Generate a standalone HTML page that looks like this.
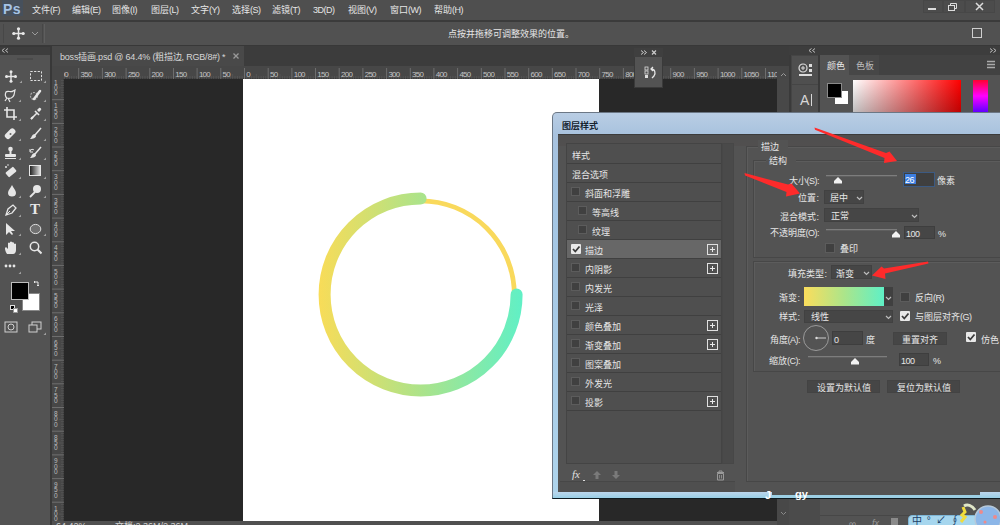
<!DOCTYPE html>
<html lang="zh-CN"><head><meta charset="utf-8">
<style>
*{margin:0;padding:0;box-sizing:border-box}
html,body{width:1000px;height:525px;overflow:hidden;background:#535353;font-family:"Liberation Sans",sans-serif;color:#e0e0e0}
.a{position:absolute}
.t{position:absolute;font-size:9px;line-height:12px;white-space:nowrap;color:#e6e6e6}
.n{letter-spacing:-0.5px}
.cb{position:absolute;width:9px;height:9px;background:#404040;border:1px solid #5c5c5c}
.cbk{position:absolute;width:10px;height:10px;background:#e8e8e8;border-radius:1px}
.pl{position:absolute;width:11px;height:11px;border:1px solid #e0e0e0}
.pl:before{content:"";position:absolute;left:2px;top:4px;width:5px;height:1px;background:#e8e8e8}
.pl:after{content:"";position:absolute;left:4px;top:2px;width:1px;height:5px;background:#e8e8e8}
.dd{position:absolute;background:#464646;border:1px solid #414141}
.inp{position:absolute;background:#464646;border:1px solid #3e3e3e}
</style></head><body>
<div class="a" style="left:0px;top:0px;width:1000px;height:20px;background:#4f4f4f;"></div>
<div class="a" style="left:0px;top:20px;width:1000px;height:2px;background:#3b3b3b;"></div>
<div class="a" style="left:2px;top:0px;width:21px;height:16px;background:#46505c;"></div>
<div class="t" style="left:3px;top:2px;font-size:14px;line-height:15px;font-weight:bold;color:#a6c4e6;letter-spacing:0.5px">Ps</div>
<div class="t" style="left:32px;top:4px;">文件<span class="n">(F)</span></div>
<div class="t" style="left:72px;top:4px;">编辑<span class="n">(E)</span></div>
<div class="t" style="left:112px;top:4px;">图像<span class="n">(I)</span></div>
<div class="t" style="left:151px;top:4px;">图层<span class="n">(L)</span></div>
<div class="t" style="left:191px;top:4px;">文字<span class="n">(Y)</span></div>
<div class="t" style="left:232px;top:4px;">选择<span class="n">(S)</span></div>
<div class="t" style="left:272px;top:4px;">滤镜<span class="n">(T)</span></div>
<div class="t" style="left:348px;top:4px;">视图<span class="n">(V)</span></div>
<div class="t" style="left:390px;top:4px;">窗口<span class="n">(W)</span></div>
<div class="t" style="left:434px;top:4px;">帮助<span class="n">(H)</span></div>
<div class="t" style="left:313px;top:4px;"><span class="n">3D(D)</span></div>
<div class="a" style="left:923px;top:0px;width:20px;height:13px;background:#4c4c4c;border:1px solid #474747"></div>
<div class="a" style="left:943px;top:0px;width:22px;height:13px;background:#4c4c4c;border:1px solid #474747"></div>
<div class="a" style="left:965px;top:0px;width:30px;height:13px;background:#4c4c4c;border:1px solid #474747"></div>
<div class="a" style="left:928px;top:8px;width:8px;height:2px;background:#dcdcdc;"></div>
<svg class="a" style="left:947px;top:2px" width="12" height="10"><rect x="1.5" y="3.5" width="6" height="5" fill="none" stroke="#dcdcdc"/><path d="M3.5 3.5V1.5H9.5V6.5H7.5" fill="none" stroke="#dcdcdc"/></svg>
<svg class="a" style="left:974px;top:2px" width="12" height="10"><path d="M2 1L9 8M9 1L2 8" stroke="#dcdcdc" stroke-width="1.5"/></svg>
<div class="a" style="left:0px;top:22px;width:1000px;height:23px;background:#515151;"></div>
<div class="a" style="left:0px;top:45px;width:1000px;height:2px;background:#383838;"></div>
<div class="a" style="left:3px;top:24px;width:1px;height:19px;background:#474747;"></div>
<div class="a" style="left:42px;top:24px;width:1px;height:19px;background:#474747;"></div>
<div class="a" style="left:44px;top:24px;width:1px;height:19px;background:#5e5e5e;"></div>
<svg class="a" style="left:12px;top:27px" width="13" height="13"><path d="M6.5 1V12M1 6.5H12" stroke="#e8e8e8" stroke-width="1.5"/><circle cx="6.5" cy="1.8" r="1.6" fill="#e8e8e8"/><circle cx="6.5" cy="11.2" r="1.6" fill="#e8e8e8"/><circle cx="1.8" cy="6.5" r="1.6" fill="#e8e8e8"/><circle cx="11.2" cy="6.5" r="1.6" fill="#e8e8e8"/></svg>
<svg class="a" style="left:31px;top:31px" width="8" height="5"><path d="M1 1L4 4L7 1" fill="none" stroke="#9a9a9a"/></svg>
<div class="t" style="left:448px;top:28px;">点按并拖移可调整效果的位置。</div>
<svg class="a" style="left:971px;top:27px" width="12" height="12"><rect x="1.5" y="1.5" width="9" height="9" fill="none" stroke="#cfcfcf"/></svg>
<div class="a" style="left:0px;top:47px;width:50px;height:478px;background:#535353;"></div>
<div class="a" style="left:0px;top:47px;width:50px;height:8px;background:#3d3d3d;"></div>
<svg class="a" style="left:1px;top:48px" width="8" height="5"><path d="M3.5 0.5L1 2.5L3.5 4.5M7 0.5L4.5 2.5L7 4.5" fill="none" stroke="#bdbdbd"/></svg>
<div class="a" style="left:17px;top:58px;width:16px;height:2px;background:#4a4a4a;"></div>
<div class="a" style="left:50px;top:46px;width:2px;height:479px;background:#383838;"></div>
<svg class="a" style="left:5px;top:70px" width="12" height="13"><path d="M6 1.5V11.5M1 6.5H11" stroke="#e8e8e8" stroke-width="1.4"/><circle cx="6" cy="1.8" r="1.5" fill="#e8e8e8"/><circle cx="6" cy="11.2" r="1.5" fill="#e8e8e8"/><circle cx="1.5" cy="6.5" r="1.5" fill="#e8e8e8"/><circle cx="10.5" cy="6.5" r="1.5" fill="#e8e8e8"/></svg>
<svg class="a" style="left:19px;top:80px" width="3" height="3"><path d="M3 0.5V3H0.5Z" fill="#a0a0a0"/></svg>
<svg class="a" style="left:29px;top:70px" width="14" height="13"><rect x="1.5" y="1.5" width="11" height="9" fill="none" stroke="#e0e0e0" stroke-dasharray="2.2 1.4"/></svg>
<svg class="a" style="left:43px;top:80px" width="3" height="3"><path d="M3 0.5V3H0.5Z" fill="#a0a0a0"/></svg>
<svg class="a" style="left:4px;top:89px" width="13" height="14"><path d="M2 3C4 1 7 4 9 2L11 1L10 6C9 9 6 10 3 9C1 8 1 5 2 3ZM3 9L1 12M4 9L6 13" fill="none" stroke="#e6e6e6" stroke-width="1.2"/></svg>
<svg class="a" style="left:18px;top:99px" width="3" height="3"><path d="M3 0.5V3H0.5Z" fill="#a0a0a0"/></svg>
<svg class="a" style="left:29px;top:89px" width="13" height="14"><circle cx="5" cy="7" r="3.5" fill="none" stroke="#a9a9a9" stroke-width="1.2" stroke-dasharray="2 1"/><path d="M5 10L11 2" stroke="#e6e6e6" stroke-width="2.5" stroke-linecap="round"/></svg>
<svg class="a" style="left:43px;top:99px" width="3" height="3"><path d="M3 0.5V3H0.5Z" fill="#a0a0a0"/></svg>
<svg class="a" style="left:4px;top:107px" width="13" height="14"><path d="M3 0V10H13M0 3H10V13" fill="none" stroke="#e6e6e6" stroke-width="1.6"/></svg>
<svg class="a" style="left:18px;top:118px" width="3" height="3"><path d="M3 0.5V3H0.5Z" fill="#a0a0a0"/></svg>
<svg class="a" style="left:29px;top:107px" width="13" height="14"><path d="M2 12L8 6M6 4L10 8" stroke="#e6e6e6" stroke-width="1.6"/><path d="M8 3L10 1C11 0 13 2 12 3L10 5" fill="#e6e6e6"/><path d="M2 12L4 10" stroke="#e6e6e6" stroke-width="2"/></svg>
<svg class="a" style="left:43px;top:118px" width="3" height="3"><path d="M3 0.5V3H0.5Z" fill="#a0a0a0"/></svg>
<svg class="a" style="left:4px;top:127px" width="13" height="14"><rect x="3" y="1" width="6" height="12" rx="2.5" transform="rotate(45 6.5 7)" fill="#e6e6e6"/><circle cx="6.5" cy="7" r="1" fill="#666"/></svg>
<svg class="a" style="left:18px;top:138px" width="3" height="3"><path d="M3 0.5V3H0.5Z" fill="#a0a0a0"/></svg>
<svg class="a" style="left:29px;top:127px" width="13" height="14"><path d="M12 1L6 8" stroke="#e6e6e6" stroke-width="1.5"/><path d="M6 7C3 7 3 10 1 12C4 12 7 11 7 9Z" fill="#e6e6e6"/></svg>
<svg class="a" style="left:43px;top:138px" width="3" height="3"><path d="M3 0.5V3H0.5Z" fill="#a0a0a0"/></svg>
<svg class="a" style="left:4px;top:146px" width="13" height="14"><circle cx="6.5" cy="3" r="2.3" fill="#e6e6e6"/><rect x="5.5" y="4" width="2" height="4" fill="#e6e6e6"/><rect x="1" y="8" width="11" height="3" rx="1" fill="#e6e6e6"/><rect x="1" y="12" width="11" height="1" fill="#e6e6e6"/></svg>
<svg class="a" style="left:18px;top:157px" width="3" height="3"><path d="M3 0.5V3H0.5Z" fill="#a0a0a0"/></svg>
<svg class="a" style="left:29px;top:146px" width="13" height="14"><path d="M12 1L6 8" stroke="#e6e6e6" stroke-width="1.5"/><path d="M6 7C3 7 3 10 1 12C4 12 7 11 7 9Z" fill="#e6e6e6"/><path d="M1 5C2 3 4 3 5 4M1 3V6H4" fill="none" stroke="#e6e6e6"/></svg>
<svg class="a" style="left:43px;top:157px" width="3" height="3"><path d="M3 0.5V3H0.5Z" fill="#a0a0a0"/></svg>
<svg class="a" style="left:4px;top:164px" width="13" height="14"><rect x="4" y="3" width="6" height="10" rx="1" transform="rotate(50 7 8)" fill="#e6e6e6"/><circle cx="2" cy="3" r="1" fill="#e6e6e6"/><circle cx="4" cy="1" r="0.8" fill="#e6e6e6"/></svg>
<svg class="a" style="left:18px;top:176px" width="3" height="3"><path d="M3 0.5V3H0.5Z" fill="#a0a0a0"/></svg>
<div class="a" style="left:29px;top:165px;width:12px;height:11px;border:1px solid #e6e6e6;background:linear-gradient(90deg,#222,#ddd)"></div>
<svg class="a" style="left:43px;top:176px" width="3" height="3"><path d="M3 0.5V3H0.5Z" fill="#a0a0a0"/></svg>
<svg class="a" style="left:7px;top:184px" width="10" height="14"><path d="M5 1C6.5 4 9 6.5 9 9C9 11.5 7.3 12.5 5 12.5C2.7 12.5 1 11.5 1 9C1 6.5 3.5 4 5 1Z" fill="#e6e6e6"/></svg>
<svg class="a" style="left:18px;top:195px" width="3" height="3"><path d="M3 0.5V3H0.5Z" fill="#a0a0a0"/></svg>
<svg class="a" style="left:29px;top:184px" width="13" height="14"><circle cx="8" cy="5" r="4" fill="#e6e6e6"/><path d="M6 8L1 13" stroke="#e6e6e6" stroke-width="1.8"/></svg>
<svg class="a" style="left:43px;top:195px" width="3" height="3"><path d="M3 0.5V3H0.5Z" fill="#a0a0a0"/></svg>
<svg class="a" style="left:4px;top:203px" width="13" height="14"><path d="M2 12L4 6L9 2L12 5L8 10Z" fill="none" stroke="#e6e6e6" stroke-width="1.3"/><path d="M2 12L6 8" stroke="#e6e6e6"/></svg>
<svg class="a" style="left:18px;top:214px" width="3" height="3"><path d="M3 0.5V3H0.5Z" fill="#a0a0a0"/></svg>
<div class="t" style="left:30px;top:202px;font-family:Liberation Serif,serif;font-size:15px;line-height:15px;font-weight:bold;color:#e8e8e8">T</div>
<svg class="a" style="left:5px;top:222px" width="12" height="14"><path d="M1 1V13L4 10L7 13L8 12L6 9H10Z" fill="#e6e6e6"/></svg>
<svg class="a" style="left:18px;top:233px" width="3" height="3"><path d="M3 0.5V3H0.5Z" fill="#a0a0a0"/></svg>
<svg class="a" style="left:29px;top:222px" width="13" height="14"><ellipse cx="6.5" cy="7" rx="5.3" ry="4.6" fill="#707070" stroke="#e0e0e0" stroke-width="1"/></svg>
<svg class="a" style="left:43px;top:233px" width="3" height="3"><path d="M3 0.5V3H0.5Z" fill="#a0a0a0"/></svg>
<svg class="a" style="left:4px;top:241px" width="13" height="14"><path d="M3 13C1 10 1 8 1 7L2 6L4 8V2L5 1.5L6 2V6V1L7 0.5L8 1V6V1.5L9 1L10 2V6V3L11 2.5L12 3V9C12 11 11 13 9 13Z" fill="#e6e6e6"/></svg>
<svg class="a" style="left:18px;top:252px" width="3" height="3"><path d="M3 0.5V3H0.5Z" fill="#a0a0a0"/></svg>
<svg class="a" style="left:29px;top:241px" width="13" height="14"><circle cx="5.5" cy="5.5" r="4.2" fill="none" stroke="#e6e6e6" stroke-width="1.5"/><path d="M8.5 8.5L12.5 12.5" stroke="#e6e6e6" stroke-width="2"/></svg>
<svg class="a" style="left:4px;top:264px" width="13" height="5"><circle cx="2" cy="2" r="1.4" fill="#e6e6e6"/><circle cx="6" cy="2" r="1.4" fill="#e6e6e6"/><circle cx="10" cy="2" r="1.4" fill="#e6e6e6"/></svg>
<svg class="a" style="left:18px;top:271px" width="3" height="3"><path d="M3 0.5V3H0.5Z" fill="#a0a0a0"/></svg>
<div class="a" style="left:22px;top:293px;width:18px;height:18px;background:#ffffff;border:1px solid #888"></div>
<div class="a" style="left:11px;top:282px;width:18px;height:18px;background:#000000;border:1px solid #bdbdbd"></div>
<svg class="a" style="left:33px;top:280px" width="8" height="8"><path d="M1 2H5V6M2 1L1 2L2 3M4 5L5 6L6 5" fill="none" stroke="#e6e6e6"/></svg>
<div class="a" style="left:10px;top:305px;width:5px;height:5px;background:#000;border:1px solid #ddd"></div>
<div class="a" style="left:13px;top:308px;width:5px;height:5px;background:#fff;border:1px solid #999"></div>
<svg class="a" style="left:4px;top:321px" width="14" height="12"><rect x="1" y="1" width="12" height="10" fill="none" stroke="#d0d0d0"/><circle cx="7" cy="6" r="3" fill="none" stroke="#d0d0d0"/></svg>
<svg class="a" style="left:28px;top:321px" width="14" height="12"><rect x="4" y="1" width="9" height="7" fill="none" stroke="#d0d0d0"/><rect x="1" y="4" width="8" height="7" fill="#535353" stroke="#d0d0d0"/></svg>
<svg class="a" style="left:43px;top:332px" width="3" height="3"><path d="M3 0.5V3H0.5Z" fill="#a0a0a0"/></svg>
<div class="a" style="left:52px;top:46px;width:725px;height:20px;background:#3c3c3c;"></div>
<div class="a" style="left:52px;top:46px;width:192px;height:20px;background:#494949;"></div>
<div class="t" style="left:60px;top:51px;letter-spacing:-0.2px;color:#d6d6d6">boss插画.psd @ 64.4% (粗描边, RGB/8#) *</div>
<svg class="a" style="left:232px;top:52px" width="8" height="8"><path d="M1.5 1.5L6.5 6.5M6.5 1.5L1.5 6.5" stroke="#9a9a9a" stroke-width="1.3"/></svg>
<div class="a" style="left:52px;top:66px;width:725px;height:13px;background:#474747;"></div>
<div class="a" style="left:52px;top:79px;width:12px;height:442px;background:#474747;"></div>
<div class="a" style="left:64px;top:78px;width:713px;height:1px;background:#3a3a3a;"></div>
<div class="a" style="left:63px;top:66px;width:1px;height:455px;background:#3a3a3a;"></div>
<div class="a" style="left:64px;top:79px;width:713px;height:442px;background:#282828;"></div>
<div class="a" style="left:243px;top:79px;width:356px;height:442px;background:#ffffff;"></div>
<svg class="a" style="left:0;top:66px" width="777" height="13"><path d="M55.1 2V13" stroke="#6e6e6e" stroke-width="1"/><path d="M57.4 10V13" stroke="#5e5e5e" stroke-width="0.6"/><path d="M59.8 10V13" stroke="#5e5e5e" stroke-width="0.6"/><path d="M62.2 10V13" stroke="#5e5e5e" stroke-width="0.6"/><path d="M64.5 10V13" stroke="#5e5e5e" stroke-width="0.6"/><path d="M66.9 8V13" stroke="#5e5e5e" stroke-width="0.6"/><path d="M69.3 10V13" stroke="#5e5e5e" stroke-width="0.6"/><path d="M71.6 10V13" stroke="#5e5e5e" stroke-width="0.6"/><path d="M74.0 10V13" stroke="#5e5e5e" stroke-width="0.6"/><path d="M76.4 10V13" stroke="#5e5e5e" stroke-width="0.6"/><text x="56.9" y="11.3" fill="#c4c4c4" font-size="8" font-family="Liberation Sans" letter-spacing="-0.75">400</text><path d="M78.7 2V13" stroke="#6e6e6e" stroke-width="1"/><path d="M81.1 10V13" stroke="#5e5e5e" stroke-width="0.6"/><path d="M83.5 10V13" stroke="#5e5e5e" stroke-width="0.6"/><path d="M85.8 10V13" stroke="#5e5e5e" stroke-width="0.6"/><path d="M88.2 10V13" stroke="#5e5e5e" stroke-width="0.6"/><path d="M90.6 8V13" stroke="#5e5e5e" stroke-width="0.6"/><path d="M92.9 10V13" stroke="#5e5e5e" stroke-width="0.6"/><path d="M95.3 10V13" stroke="#5e5e5e" stroke-width="0.6"/><path d="M97.7 10V13" stroke="#5e5e5e" stroke-width="0.6"/><path d="M100.1 10V13" stroke="#5e5e5e" stroke-width="0.6"/><text x="80.5" y="11.3" fill="#c4c4c4" font-size="8" font-family="Liberation Sans" letter-spacing="-0.75">350</text><path d="M102.4 2V13" stroke="#6e6e6e" stroke-width="1"/><path d="M104.8 10V13" stroke="#5e5e5e" stroke-width="0.6"/><path d="M107.2 10V13" stroke="#5e5e5e" stroke-width="0.6"/><path d="M109.5 10V13" stroke="#5e5e5e" stroke-width="0.6"/><path d="M111.9 10V13" stroke="#5e5e5e" stroke-width="0.6"/><path d="M114.3 8V13" stroke="#5e5e5e" stroke-width="0.6"/><path d="M116.6 10V13" stroke="#5e5e5e" stroke-width="0.6"/><path d="M119.0 10V13" stroke="#5e5e5e" stroke-width="0.6"/><path d="M121.4 10V13" stroke="#5e5e5e" stroke-width="0.6"/><path d="M123.7 10V13" stroke="#5e5e5e" stroke-width="0.6"/><text x="104.2" y="11.3" fill="#c4c4c4" font-size="8" font-family="Liberation Sans" letter-spacing="-0.75">300</text><path d="M126.1 2V13" stroke="#6e6e6e" stroke-width="1"/><path d="M128.5 10V13" stroke="#5e5e5e" stroke-width="0.6"/><path d="M130.8 10V13" stroke="#5e5e5e" stroke-width="0.6"/><path d="M133.2 10V13" stroke="#5e5e5e" stroke-width="0.6"/><path d="M135.6 10V13" stroke="#5e5e5e" stroke-width="0.6"/><path d="M137.9 8V13" stroke="#5e5e5e" stroke-width="0.6"/><path d="M140.3 10V13" stroke="#5e5e5e" stroke-width="0.6"/><path d="M142.7 10V13" stroke="#5e5e5e" stroke-width="0.6"/><path d="M145.0 10V13" stroke="#5e5e5e" stroke-width="0.6"/><path d="M147.4 10V13" stroke="#5e5e5e" stroke-width="0.6"/><text x="127.9" y="11.3" fill="#c4c4c4" font-size="8" font-family="Liberation Sans" letter-spacing="-0.75">250</text><path d="M149.8 2V13" stroke="#6e6e6e" stroke-width="1"/><path d="M152.1 10V13" stroke="#5e5e5e" stroke-width="0.6"/><path d="M154.5 10V13" stroke="#5e5e5e" stroke-width="0.6"/><path d="M156.9 10V13" stroke="#5e5e5e" stroke-width="0.6"/><path d="M159.3 10V13" stroke="#5e5e5e" stroke-width="0.6"/><path d="M161.6 8V13" stroke="#5e5e5e" stroke-width="0.6"/><path d="M164.0 10V13" stroke="#5e5e5e" stroke-width="0.6"/><path d="M166.4 10V13" stroke="#5e5e5e" stroke-width="0.6"/><path d="M168.7 10V13" stroke="#5e5e5e" stroke-width="0.6"/><path d="M171.1 10V13" stroke="#5e5e5e" stroke-width="0.6"/><text x="151.6" y="11.3" fill="#c4c4c4" font-size="8" font-family="Liberation Sans" letter-spacing="-0.75">200</text><path d="M173.5 2V13" stroke="#6e6e6e" stroke-width="1"/><path d="M175.8 10V13" stroke="#5e5e5e" stroke-width="0.6"/><path d="M178.2 10V13" stroke="#5e5e5e" stroke-width="0.6"/><path d="M180.6 10V13" stroke="#5e5e5e" stroke-width="0.6"/><path d="M182.9 10V13" stroke="#5e5e5e" stroke-width="0.6"/><path d="M185.3 8V13" stroke="#5e5e5e" stroke-width="0.6"/><path d="M187.7 10V13" stroke="#5e5e5e" stroke-width="0.6"/><path d="M190.0 10V13" stroke="#5e5e5e" stroke-width="0.6"/><path d="M192.4 10V13" stroke="#5e5e5e" stroke-width="0.6"/><path d="M194.8 10V13" stroke="#5e5e5e" stroke-width="0.6"/><text x="175.3" y="11.3" fill="#c4c4c4" font-size="8" font-family="Liberation Sans" letter-spacing="-0.75">150</text><path d="M197.1 2V13" stroke="#6e6e6e" stroke-width="1"/><path d="M199.5 10V13" stroke="#5e5e5e" stroke-width="0.6"/><path d="M201.9 10V13" stroke="#5e5e5e" stroke-width="0.6"/><path d="M204.2 10V13" stroke="#5e5e5e" stroke-width="0.6"/><path d="M206.6 10V13" stroke="#5e5e5e" stroke-width="0.6"/><path d="M209.0 8V13" stroke="#5e5e5e" stroke-width="0.6"/><path d="M211.3 10V13" stroke="#5e5e5e" stroke-width="0.6"/><path d="M213.7 10V13" stroke="#5e5e5e" stroke-width="0.6"/><path d="M216.1 10V13" stroke="#5e5e5e" stroke-width="0.6"/><path d="M218.5 10V13" stroke="#5e5e5e" stroke-width="0.6"/><text x="198.9" y="11.3" fill="#c4c4c4" font-size="8" font-family="Liberation Sans" letter-spacing="-0.75">100</text><path d="M220.8 2V13" stroke="#6e6e6e" stroke-width="1"/><path d="M223.2 10V13" stroke="#5e5e5e" stroke-width="0.6"/><path d="M225.6 10V13" stroke="#5e5e5e" stroke-width="0.6"/><path d="M227.9 10V13" stroke="#5e5e5e" stroke-width="0.6"/><path d="M230.3 10V13" stroke="#5e5e5e" stroke-width="0.6"/><path d="M232.7 8V13" stroke="#5e5e5e" stroke-width="0.6"/><path d="M235.0 10V13" stroke="#5e5e5e" stroke-width="0.6"/><path d="M237.4 10V13" stroke="#5e5e5e" stroke-width="0.6"/><path d="M239.8 10V13" stroke="#5e5e5e" stroke-width="0.6"/><path d="M242.1 10V13" stroke="#5e5e5e" stroke-width="0.6"/><text x="222.6" y="11.3" fill="#c4c4c4" font-size="8" font-family="Liberation Sans" letter-spacing="-0.75">50</text><path d="M244.5 2V13" stroke="#6e6e6e" stroke-width="1"/><path d="M246.9 10V13" stroke="#5e5e5e" stroke-width="0.6"/><path d="M249.2 10V13" stroke="#5e5e5e" stroke-width="0.6"/><path d="M251.6 10V13" stroke="#5e5e5e" stroke-width="0.6"/><path d="M254.0 10V13" stroke="#5e5e5e" stroke-width="0.6"/><path d="M256.3 8V13" stroke="#5e5e5e" stroke-width="0.6"/><path d="M258.7 10V13" stroke="#5e5e5e" stroke-width="0.6"/><path d="M261.1 10V13" stroke="#5e5e5e" stroke-width="0.6"/><path d="M263.4 10V13" stroke="#5e5e5e" stroke-width="0.6"/><path d="M265.8 10V13" stroke="#5e5e5e" stroke-width="0.6"/><text x="246.3" y="11.3" fill="#c4c4c4" font-size="8" font-family="Liberation Sans" letter-spacing="-0.75">0</text><path d="M268.2 2V13" stroke="#6e6e6e" stroke-width="1"/><path d="M270.5 10V13" stroke="#5e5e5e" stroke-width="0.6"/><path d="M272.9 10V13" stroke="#5e5e5e" stroke-width="0.6"/><path d="M275.3 10V13" stroke="#5e5e5e" stroke-width="0.6"/><path d="M277.7 10V13" stroke="#5e5e5e" stroke-width="0.6"/><path d="M280.0 8V13" stroke="#5e5e5e" stroke-width="0.6"/><path d="M282.4 10V13" stroke="#5e5e5e" stroke-width="0.6"/><path d="M284.8 10V13" stroke="#5e5e5e" stroke-width="0.6"/><path d="M287.1 10V13" stroke="#5e5e5e" stroke-width="0.6"/><path d="M289.5 10V13" stroke="#5e5e5e" stroke-width="0.6"/><text x="270.0" y="11.3" fill="#c4c4c4" font-size="8" font-family="Liberation Sans" letter-spacing="-0.75">50</text><path d="M291.9 2V13" stroke="#6e6e6e" stroke-width="1"/><path d="M294.2 10V13" stroke="#5e5e5e" stroke-width="0.6"/><path d="M296.6 10V13" stroke="#5e5e5e" stroke-width="0.6"/><path d="M299.0 10V13" stroke="#5e5e5e" stroke-width="0.6"/><path d="M301.3 10V13" stroke="#5e5e5e" stroke-width="0.6"/><path d="M303.7 8V13" stroke="#5e5e5e" stroke-width="0.6"/><path d="M306.1 10V13" stroke="#5e5e5e" stroke-width="0.6"/><path d="M308.4 10V13" stroke="#5e5e5e" stroke-width="0.6"/><path d="M310.8 10V13" stroke="#5e5e5e" stroke-width="0.6"/><path d="M313.2 10V13" stroke="#5e5e5e" stroke-width="0.6"/><text x="293.7" y="11.3" fill="#c4c4c4" font-size="8" font-family="Liberation Sans" letter-spacing="-0.75">100</text><path d="M315.5 2V13" stroke="#6e6e6e" stroke-width="1"/><path d="M317.9 10V13" stroke="#5e5e5e" stroke-width="0.6"/><path d="M320.3 10V13" stroke="#5e5e5e" stroke-width="0.6"/><path d="M322.6 10V13" stroke="#5e5e5e" stroke-width="0.6"/><path d="M325.0 10V13" stroke="#5e5e5e" stroke-width="0.6"/><path d="M327.4 8V13" stroke="#5e5e5e" stroke-width="0.6"/><path d="M329.7 10V13" stroke="#5e5e5e" stroke-width="0.6"/><path d="M332.1 10V13" stroke="#5e5e5e" stroke-width="0.6"/><path d="M334.5 10V13" stroke="#5e5e5e" stroke-width="0.6"/><path d="M336.9 10V13" stroke="#5e5e5e" stroke-width="0.6"/><text x="317.3" y="11.3" fill="#c4c4c4" font-size="8" font-family="Liberation Sans" letter-spacing="-0.75">150</text><path d="M339.2 2V13" stroke="#6e6e6e" stroke-width="1"/><path d="M341.6 10V13" stroke="#5e5e5e" stroke-width="0.6"/><path d="M344.0 10V13" stroke="#5e5e5e" stroke-width="0.6"/><path d="M346.3 10V13" stroke="#5e5e5e" stroke-width="0.6"/><path d="M348.7 10V13" stroke="#5e5e5e" stroke-width="0.6"/><path d="M351.1 8V13" stroke="#5e5e5e" stroke-width="0.6"/><path d="M353.4 10V13" stroke="#5e5e5e" stroke-width="0.6"/><path d="M355.8 10V13" stroke="#5e5e5e" stroke-width="0.6"/><path d="M358.2 10V13" stroke="#5e5e5e" stroke-width="0.6"/><path d="M360.5 10V13" stroke="#5e5e5e" stroke-width="0.6"/><text x="341.0" y="11.3" fill="#c4c4c4" font-size="8" font-family="Liberation Sans" letter-spacing="-0.75">200</text><path d="M362.9 2V13" stroke="#6e6e6e" stroke-width="1"/><path d="M365.3 10V13" stroke="#5e5e5e" stroke-width="0.6"/><path d="M367.6 10V13" stroke="#5e5e5e" stroke-width="0.6"/><path d="M370.0 10V13" stroke="#5e5e5e" stroke-width="0.6"/><path d="M372.4 10V13" stroke="#5e5e5e" stroke-width="0.6"/><path d="M374.7 8V13" stroke="#5e5e5e" stroke-width="0.6"/><path d="M377.1 10V13" stroke="#5e5e5e" stroke-width="0.6"/><path d="M379.5 10V13" stroke="#5e5e5e" stroke-width="0.6"/><path d="M381.8 10V13" stroke="#5e5e5e" stroke-width="0.6"/><path d="M384.2 10V13" stroke="#5e5e5e" stroke-width="0.6"/><text x="364.7" y="11.3" fill="#c4c4c4" font-size="8" font-family="Liberation Sans" letter-spacing="-0.75">250</text><path d="M386.6 2V13" stroke="#6e6e6e" stroke-width="1"/><path d="M388.9 10V13" stroke="#5e5e5e" stroke-width="0.6"/><path d="M391.3 10V13" stroke="#5e5e5e" stroke-width="0.6"/><path d="M393.7 10V13" stroke="#5e5e5e" stroke-width="0.6"/><path d="M396.1 10V13" stroke="#5e5e5e" stroke-width="0.6"/><path d="M398.4 8V13" stroke="#5e5e5e" stroke-width="0.6"/><path d="M400.8 10V13" stroke="#5e5e5e" stroke-width="0.6"/><path d="M403.2 10V13" stroke="#5e5e5e" stroke-width="0.6"/><path d="M405.5 10V13" stroke="#5e5e5e" stroke-width="0.6"/><path d="M407.9 10V13" stroke="#5e5e5e" stroke-width="0.6"/><text x="388.4" y="11.3" fill="#c4c4c4" font-size="8" font-family="Liberation Sans" letter-spacing="-0.75">300</text><path d="M410.3 2V13" stroke="#6e6e6e" stroke-width="1"/><path d="M412.6 10V13" stroke="#5e5e5e" stroke-width="0.6"/><path d="M415.0 10V13" stroke="#5e5e5e" stroke-width="0.6"/><path d="M417.4 10V13" stroke="#5e5e5e" stroke-width="0.6"/><path d="M419.7 10V13" stroke="#5e5e5e" stroke-width="0.6"/><path d="M422.1 8V13" stroke="#5e5e5e" stroke-width="0.6"/><path d="M424.5 10V13" stroke="#5e5e5e" stroke-width="0.6"/><path d="M426.8 10V13" stroke="#5e5e5e" stroke-width="0.6"/><path d="M429.2 10V13" stroke="#5e5e5e" stroke-width="0.6"/><path d="M431.6 10V13" stroke="#5e5e5e" stroke-width="0.6"/><text x="412.1" y="11.3" fill="#c4c4c4" font-size="8" font-family="Liberation Sans" letter-spacing="-0.75">350</text><path d="M433.9 2V13" stroke="#6e6e6e" stroke-width="1"/><path d="M436.3 10V13" stroke="#5e5e5e" stroke-width="0.6"/><path d="M438.7 10V13" stroke="#5e5e5e" stroke-width="0.6"/><path d="M441.0 10V13" stroke="#5e5e5e" stroke-width="0.6"/><path d="M443.4 10V13" stroke="#5e5e5e" stroke-width="0.6"/><path d="M445.8 8V13" stroke="#5e5e5e" stroke-width="0.6"/><path d="M448.1 10V13" stroke="#5e5e5e" stroke-width="0.6"/><path d="M450.5 10V13" stroke="#5e5e5e" stroke-width="0.6"/><path d="M452.9 10V13" stroke="#5e5e5e" stroke-width="0.6"/><path d="M455.3 10V13" stroke="#5e5e5e" stroke-width="0.6"/><text x="435.7" y="11.3" fill="#c4c4c4" font-size="8" font-family="Liberation Sans" letter-spacing="-0.75">400</text><path d="M457.6 2V13" stroke="#6e6e6e" stroke-width="1"/><path d="M460.0 10V13" stroke="#5e5e5e" stroke-width="0.6"/><path d="M462.4 10V13" stroke="#5e5e5e" stroke-width="0.6"/><path d="M464.7 10V13" stroke="#5e5e5e" stroke-width="0.6"/><path d="M467.1 10V13" stroke="#5e5e5e" stroke-width="0.6"/><path d="M469.5 8V13" stroke="#5e5e5e" stroke-width="0.6"/><path d="M471.8 10V13" stroke="#5e5e5e" stroke-width="0.6"/><path d="M474.2 10V13" stroke="#5e5e5e" stroke-width="0.6"/><path d="M476.6 10V13" stroke="#5e5e5e" stroke-width="0.6"/><path d="M478.9 10V13" stroke="#5e5e5e" stroke-width="0.6"/><text x="459.4" y="11.3" fill="#c4c4c4" font-size="8" font-family="Liberation Sans" letter-spacing="-0.75">450</text><path d="M481.3 2V13" stroke="#6e6e6e" stroke-width="1"/><path d="M483.7 10V13" stroke="#5e5e5e" stroke-width="0.6"/><path d="M486.0 10V13" stroke="#5e5e5e" stroke-width="0.6"/><path d="M488.4 10V13" stroke="#5e5e5e" stroke-width="0.6"/><path d="M490.8 10V13" stroke="#5e5e5e" stroke-width="0.6"/><path d="M493.1 8V13" stroke="#5e5e5e" stroke-width="0.6"/><path d="M495.5 10V13" stroke="#5e5e5e" stroke-width="0.6"/><path d="M497.9 10V13" stroke="#5e5e5e" stroke-width="0.6"/><path d="M500.2 10V13" stroke="#5e5e5e" stroke-width="0.6"/><path d="M502.6 10V13" stroke="#5e5e5e" stroke-width="0.6"/><text x="483.1" y="11.3" fill="#c4c4c4" font-size="8" font-family="Liberation Sans" letter-spacing="-0.75">500</text><path d="M505.0 2V13" stroke="#6e6e6e" stroke-width="1"/><path d="M507.3 10V13" stroke="#5e5e5e" stroke-width="0.6"/><path d="M509.7 10V13" stroke="#5e5e5e" stroke-width="0.6"/><path d="M512.1 10V13" stroke="#5e5e5e" stroke-width="0.6"/><path d="M514.5 10V13" stroke="#5e5e5e" stroke-width="0.6"/><path d="M516.8 8V13" stroke="#5e5e5e" stroke-width="0.6"/><path d="M519.2 10V13" stroke="#5e5e5e" stroke-width="0.6"/><path d="M521.6 10V13" stroke="#5e5e5e" stroke-width="0.6"/><path d="M523.9 10V13" stroke="#5e5e5e" stroke-width="0.6"/><path d="M526.3 10V13" stroke="#5e5e5e" stroke-width="0.6"/><text x="506.8" y="11.3" fill="#c4c4c4" font-size="8" font-family="Liberation Sans" letter-spacing="-0.75">550</text><path d="M528.7 2V13" stroke="#6e6e6e" stroke-width="1"/><path d="M531.0 10V13" stroke="#5e5e5e" stroke-width="0.6"/><path d="M533.4 10V13" stroke="#5e5e5e" stroke-width="0.6"/><path d="M535.8 10V13" stroke="#5e5e5e" stroke-width="0.6"/><path d="M538.1 10V13" stroke="#5e5e5e" stroke-width="0.6"/><path d="M540.5 8V13" stroke="#5e5e5e" stroke-width="0.6"/><path d="M542.9 10V13" stroke="#5e5e5e" stroke-width="0.6"/><path d="M545.2 10V13" stroke="#5e5e5e" stroke-width="0.6"/><path d="M547.6 10V13" stroke="#5e5e5e" stroke-width="0.6"/><path d="M550.0 10V13" stroke="#5e5e5e" stroke-width="0.6"/><text x="530.5" y="11.3" fill="#c4c4c4" font-size="8" font-family="Liberation Sans" letter-spacing="-0.75">600</text><path d="M552.3 2V13" stroke="#6e6e6e" stroke-width="1"/><path d="M554.7 10V13" stroke="#5e5e5e" stroke-width="0.6"/><path d="M557.1 10V13" stroke="#5e5e5e" stroke-width="0.6"/><path d="M559.4 10V13" stroke="#5e5e5e" stroke-width="0.6"/><path d="M561.8 10V13" stroke="#5e5e5e" stroke-width="0.6"/><path d="M564.2 8V13" stroke="#5e5e5e" stroke-width="0.6"/><path d="M566.5 10V13" stroke="#5e5e5e" stroke-width="0.6"/><path d="M568.9 10V13" stroke="#5e5e5e" stroke-width="0.6"/><path d="M571.3 10V13" stroke="#5e5e5e" stroke-width="0.6"/><path d="M573.7 10V13" stroke="#5e5e5e" stroke-width="0.6"/><text x="554.1" y="11.3" fill="#c4c4c4" font-size="8" font-family="Liberation Sans" letter-spacing="-0.75">650</text><path d="M576.0 2V13" stroke="#6e6e6e" stroke-width="1"/><path d="M578.4 10V13" stroke="#5e5e5e" stroke-width="0.6"/><path d="M580.8 10V13" stroke="#5e5e5e" stroke-width="0.6"/><path d="M583.1 10V13" stroke="#5e5e5e" stroke-width="0.6"/><path d="M585.5 10V13" stroke="#5e5e5e" stroke-width="0.6"/><path d="M587.9 8V13" stroke="#5e5e5e" stroke-width="0.6"/><path d="M590.2 10V13" stroke="#5e5e5e" stroke-width="0.6"/><path d="M592.6 10V13" stroke="#5e5e5e" stroke-width="0.6"/><path d="M595.0 10V13" stroke="#5e5e5e" stroke-width="0.6"/><path d="M597.3 10V13" stroke="#5e5e5e" stroke-width="0.6"/><text x="577.8" y="11.3" fill="#c4c4c4" font-size="8" font-family="Liberation Sans" letter-spacing="-0.75">700</text><path d="M599.7 2V13" stroke="#6e6e6e" stroke-width="1"/><path d="M602.1 10V13" stroke="#5e5e5e" stroke-width="0.6"/><path d="M604.4 10V13" stroke="#5e5e5e" stroke-width="0.6"/><path d="M606.8 10V13" stroke="#5e5e5e" stroke-width="0.6"/><path d="M609.2 10V13" stroke="#5e5e5e" stroke-width="0.6"/><path d="M611.5 8V13" stroke="#5e5e5e" stroke-width="0.6"/><path d="M613.9 10V13" stroke="#5e5e5e" stroke-width="0.6"/><path d="M616.3 10V13" stroke="#5e5e5e" stroke-width="0.6"/><path d="M618.6 10V13" stroke="#5e5e5e" stroke-width="0.6"/><path d="M621.0 10V13" stroke="#5e5e5e" stroke-width="0.6"/><text x="601.5" y="11.3" fill="#c4c4c4" font-size="8" font-family="Liberation Sans" letter-spacing="-0.75">750</text><path d="M623.4 2V13" stroke="#6e6e6e" stroke-width="1"/><path d="M625.7 10V13" stroke="#5e5e5e" stroke-width="0.6"/><path d="M628.1 10V13" stroke="#5e5e5e" stroke-width="0.6"/><path d="M630.5 10V13" stroke="#5e5e5e" stroke-width="0.6"/><path d="M632.9 10V13" stroke="#5e5e5e" stroke-width="0.6"/><path d="M635.2 8V13" stroke="#5e5e5e" stroke-width="0.6"/><path d="M637.6 10V13" stroke="#5e5e5e" stroke-width="0.6"/><path d="M640.0 10V13" stroke="#5e5e5e" stroke-width="0.6"/><path d="M642.3 10V13" stroke="#5e5e5e" stroke-width="0.6"/><path d="M644.7 10V13" stroke="#5e5e5e" stroke-width="0.6"/><text x="625.2" y="11.3" fill="#c4c4c4" font-size="8" font-family="Liberation Sans" letter-spacing="-0.75">800</text><path d="M647.1 2V13" stroke="#6e6e6e" stroke-width="1"/><path d="M649.4 10V13" stroke="#5e5e5e" stroke-width="0.6"/><path d="M651.8 10V13" stroke="#5e5e5e" stroke-width="0.6"/><path d="M654.2 10V13" stroke="#5e5e5e" stroke-width="0.6"/><path d="M656.5 10V13" stroke="#5e5e5e" stroke-width="0.6"/><path d="M658.9 8V13" stroke="#5e5e5e" stroke-width="0.6"/><path d="M661.3 10V13" stroke="#5e5e5e" stroke-width="0.6"/><path d="M663.6 10V13" stroke="#5e5e5e" stroke-width="0.6"/><path d="M666.0 10V13" stroke="#5e5e5e" stroke-width="0.6"/><path d="M668.4 10V13" stroke="#5e5e5e" stroke-width="0.6"/><text x="648.9" y="11.3" fill="#c4c4c4" font-size="8" font-family="Liberation Sans" letter-spacing="-0.75">850</text><path d="M670.7 2V13" stroke="#6e6e6e" stroke-width="1"/><path d="M673.1 10V13" stroke="#5e5e5e" stroke-width="0.6"/><path d="M675.5 10V13" stroke="#5e5e5e" stroke-width="0.6"/><path d="M677.8 10V13" stroke="#5e5e5e" stroke-width="0.6"/><path d="M680.2 10V13" stroke="#5e5e5e" stroke-width="0.6"/><path d="M682.6 8V13" stroke="#5e5e5e" stroke-width="0.6"/><path d="M684.9 10V13" stroke="#5e5e5e" stroke-width="0.6"/><path d="M687.3 10V13" stroke="#5e5e5e" stroke-width="0.6"/><path d="M689.7 10V13" stroke="#5e5e5e" stroke-width="0.6"/><path d="M692.1 10V13" stroke="#5e5e5e" stroke-width="0.6"/><text x="672.5" y="11.3" fill="#c4c4c4" font-size="8" font-family="Liberation Sans" letter-spacing="-0.75">900</text><path d="M694.4 2V13" stroke="#6e6e6e" stroke-width="1"/><path d="M696.8 10V13" stroke="#5e5e5e" stroke-width="0.6"/><path d="M699.2 10V13" stroke="#5e5e5e" stroke-width="0.6"/><path d="M701.5 10V13" stroke="#5e5e5e" stroke-width="0.6"/><path d="M703.9 10V13" stroke="#5e5e5e" stroke-width="0.6"/><path d="M706.3 8V13" stroke="#5e5e5e" stroke-width="0.6"/><path d="M708.6 10V13" stroke="#5e5e5e" stroke-width="0.6"/><path d="M711.0 10V13" stroke="#5e5e5e" stroke-width="0.6"/><path d="M713.4 10V13" stroke="#5e5e5e" stroke-width="0.6"/><path d="M715.7 10V13" stroke="#5e5e5e" stroke-width="0.6"/><text x="696.2" y="11.3" fill="#c4c4c4" font-size="8" font-family="Liberation Sans" letter-spacing="-0.75">950</text><path d="M718.1 2V13" stroke="#6e6e6e" stroke-width="1"/><path d="M720.5 10V13" stroke="#5e5e5e" stroke-width="0.6"/><path d="M722.8 10V13" stroke="#5e5e5e" stroke-width="0.6"/><path d="M725.2 10V13" stroke="#5e5e5e" stroke-width="0.6"/><path d="M727.6 10V13" stroke="#5e5e5e" stroke-width="0.6"/><path d="M729.9 8V13" stroke="#5e5e5e" stroke-width="0.6"/><path d="M732.3 10V13" stroke="#5e5e5e" stroke-width="0.6"/><path d="M734.7 10V13" stroke="#5e5e5e" stroke-width="0.6"/><path d="M737.0 10V13" stroke="#5e5e5e" stroke-width="0.6"/><path d="M739.4 10V13" stroke="#5e5e5e" stroke-width="0.6"/><text x="719.9" y="11.3" fill="#c4c4c4" font-size="8" font-family="Liberation Sans" letter-spacing="-0.75">1000</text><path d="M741.8 2V13" stroke="#6e6e6e" stroke-width="1"/><path d="M744.1 10V13" stroke="#5e5e5e" stroke-width="0.6"/><path d="M746.5 10V13" stroke="#5e5e5e" stroke-width="0.6"/><path d="M748.9 10V13" stroke="#5e5e5e" stroke-width="0.6"/><path d="M751.3 10V13" stroke="#5e5e5e" stroke-width="0.6"/><path d="M753.6 8V13" stroke="#5e5e5e" stroke-width="0.6"/><path d="M756.0 10V13" stroke="#5e5e5e" stroke-width="0.6"/><path d="M758.4 10V13" stroke="#5e5e5e" stroke-width="0.6"/><path d="M760.7 10V13" stroke="#5e5e5e" stroke-width="0.6"/><path d="M763.1 10V13" stroke="#5e5e5e" stroke-width="0.6"/><text x="743.6" y="11.3" fill="#c4c4c4" font-size="8" font-family="Liberation Sans" letter-spacing="-0.75">1050</text><path d="M765.5 2V13" stroke="#6e6e6e" stroke-width="1"/><path d="M767.8 10V13" stroke="#5e5e5e" stroke-width="0.6"/><path d="M770.2 10V13" stroke="#5e5e5e" stroke-width="0.6"/><path d="M772.6 10V13" stroke="#5e5e5e" stroke-width="0.6"/><path d="M774.9 10V13" stroke="#5e5e5e" stroke-width="0.6"/><text x="767.3" y="11.3" fill="#c4c4c4" font-size="8" font-family="Liberation Sans" letter-spacing="-0.75">1100</text></svg>
<div class="a" style="left:52px;top:66px;width:12px;height:13px;background:#474747;"></div>
<svg class="a" style="left:52px;top:79px" width="12" height="442"><path d="M0 -3.0H12" stroke="#6e6e6e" stroke-width="1"/><path d="M9 -0.6H12" stroke="#5e5e5e" stroke-width="0.6"/><path d="M9 1.7H12" stroke="#5e5e5e" stroke-width="0.6"/><path d="M9 4.1H12" stroke="#5e5e5e" stroke-width="0.6"/><path d="M9 6.5H12" stroke="#5e5e5e" stroke-width="0.6"/><path d="M7 8.8H12" stroke="#5e5e5e" stroke-width="0.6"/><path d="M9 11.2H12" stroke="#5e5e5e" stroke-width="0.6"/><path d="M9 13.6H12" stroke="#5e5e5e" stroke-width="0.6"/><path d="M9 15.9H12" stroke="#5e5e5e" stroke-width="0.6"/><path d="M9 18.3H12" stroke="#5e5e5e" stroke-width="0.6"/><text x="2" y="5.5" fill="#bcbcbc" font-size="6.5" font-family="Liberation Sans">1</text><text x="2" y="10.8" fill="#bcbcbc" font-size="6.5" font-family="Liberation Sans">0</text><text x="2" y="16.1" fill="#bcbcbc" font-size="6.5" font-family="Liberation Sans">0</text><path d="M0 20.7H12" stroke="#6e6e6e" stroke-width="1"/><path d="M9 23.0H12" stroke="#5e5e5e" stroke-width="0.6"/><path d="M9 25.4H12" stroke="#5e5e5e" stroke-width="0.6"/><path d="M9 27.8H12" stroke="#5e5e5e" stroke-width="0.6"/><path d="M9 30.2H12" stroke="#5e5e5e" stroke-width="0.6"/><path d="M7 32.5H12" stroke="#5e5e5e" stroke-width="0.6"/><path d="M9 34.9H12" stroke="#5e5e5e" stroke-width="0.6"/><path d="M9 37.3H12" stroke="#5e5e5e" stroke-width="0.6"/><path d="M9 39.6H12" stroke="#5e5e5e" stroke-width="0.6"/><path d="M9 42.0H12" stroke="#5e5e5e" stroke-width="0.6"/><text x="2" y="29.2" fill="#bcbcbc" font-size="6.5" font-family="Liberation Sans">1</text><text x="2" y="34.5" fill="#bcbcbc" font-size="6.5" font-family="Liberation Sans">5</text><text x="2" y="39.8" fill="#bcbcbc" font-size="6.5" font-family="Liberation Sans">0</text><path d="M0 44.4H12" stroke="#6e6e6e" stroke-width="1"/><path d="M9 46.7H12" stroke="#5e5e5e" stroke-width="0.6"/><path d="M9 49.1H12" stroke="#5e5e5e" stroke-width="0.6"/><path d="M9 51.5H12" stroke="#5e5e5e" stroke-width="0.6"/><path d="M9 53.8H12" stroke="#5e5e5e" stroke-width="0.6"/><path d="M7 56.2H12" stroke="#5e5e5e" stroke-width="0.6"/><path d="M9 58.6H12" stroke="#5e5e5e" stroke-width="0.6"/><path d="M9 60.9H12" stroke="#5e5e5e" stroke-width="0.6"/><path d="M9 63.3H12" stroke="#5e5e5e" stroke-width="0.6"/><path d="M9 65.7H12" stroke="#5e5e5e" stroke-width="0.6"/><text x="2" y="52.9" fill="#bcbcbc" font-size="6.5" font-family="Liberation Sans">2</text><text x="2" y="58.2" fill="#bcbcbc" font-size="6.5" font-family="Liberation Sans">0</text><text x="2" y="63.5" fill="#bcbcbc" font-size="6.5" font-family="Liberation Sans">0</text><path d="M0 68.0H12" stroke="#6e6e6e" stroke-width="1"/><path d="M9 70.4H12" stroke="#5e5e5e" stroke-width="0.6"/><path d="M9 72.8H12" stroke="#5e5e5e" stroke-width="0.6"/><path d="M9 75.1H12" stroke="#5e5e5e" stroke-width="0.6"/><path d="M9 77.5H12" stroke="#5e5e5e" stroke-width="0.6"/><path d="M7 79.9H12" stroke="#5e5e5e" stroke-width="0.6"/><path d="M9 82.2H12" stroke="#5e5e5e" stroke-width="0.6"/><path d="M9 84.6H12" stroke="#5e5e5e" stroke-width="0.6"/><path d="M9 87.0H12" stroke="#5e5e5e" stroke-width="0.6"/><path d="M9 89.4H12" stroke="#5e5e5e" stroke-width="0.6"/><text x="2" y="76.5" fill="#bcbcbc" font-size="6.5" font-family="Liberation Sans">2</text><text x="2" y="81.8" fill="#bcbcbc" font-size="6.5" font-family="Liberation Sans">5</text><text x="2" y="87.1" fill="#bcbcbc" font-size="6.5" font-family="Liberation Sans">0</text><path d="M0 91.7H12" stroke="#6e6e6e" stroke-width="1"/><path d="M9 94.1H12" stroke="#5e5e5e" stroke-width="0.6"/><path d="M9 96.5H12" stroke="#5e5e5e" stroke-width="0.6"/><path d="M9 98.8H12" stroke="#5e5e5e" stroke-width="0.6"/><path d="M9 101.2H12" stroke="#5e5e5e" stroke-width="0.6"/><path d="M7 103.6H12" stroke="#5e5e5e" stroke-width="0.6"/><path d="M9 105.9H12" stroke="#5e5e5e" stroke-width="0.6"/><path d="M9 108.3H12" stroke="#5e5e5e" stroke-width="0.6"/><path d="M9 110.7H12" stroke="#5e5e5e" stroke-width="0.6"/><path d="M9 113.0H12" stroke="#5e5e5e" stroke-width="0.6"/><text x="2" y="100.2" fill="#bcbcbc" font-size="6.5" font-family="Liberation Sans">3</text><text x="2" y="105.5" fill="#bcbcbc" font-size="6.5" font-family="Liberation Sans">0</text><text x="2" y="110.8" fill="#bcbcbc" font-size="6.5" font-family="Liberation Sans">0</text><path d="M0 115.4H12" stroke="#6e6e6e" stroke-width="1"/><path d="M9 117.8H12" stroke="#5e5e5e" stroke-width="0.6"/><path d="M9 120.1H12" stroke="#5e5e5e" stroke-width="0.6"/><path d="M9 122.5H12" stroke="#5e5e5e" stroke-width="0.6"/><path d="M9 124.9H12" stroke="#5e5e5e" stroke-width="0.6"/><path d="M7 127.2H12" stroke="#5e5e5e" stroke-width="0.6"/><path d="M9 129.6H12" stroke="#5e5e5e" stroke-width="0.6"/><path d="M9 132.0H12" stroke="#5e5e5e" stroke-width="0.6"/><path d="M9 134.3H12" stroke="#5e5e5e" stroke-width="0.6"/><path d="M9 136.7H12" stroke="#5e5e5e" stroke-width="0.6"/><text x="2" y="123.9" fill="#bcbcbc" font-size="6.5" font-family="Liberation Sans">3</text><text x="2" y="129.2" fill="#bcbcbc" font-size="6.5" font-family="Liberation Sans">5</text><text x="2" y="134.5" fill="#bcbcbc" font-size="6.5" font-family="Liberation Sans">0</text><path d="M0 139.1H12" stroke="#6e6e6e" stroke-width="1"/><path d="M9 141.4H12" stroke="#5e5e5e" stroke-width="0.6"/><path d="M9 143.8H12" stroke="#5e5e5e" stroke-width="0.6"/><path d="M9 146.2H12" stroke="#5e5e5e" stroke-width="0.6"/><path d="M9 148.6H12" stroke="#5e5e5e" stroke-width="0.6"/><path d="M7 150.9H12" stroke="#5e5e5e" stroke-width="0.6"/><path d="M9 153.3H12" stroke="#5e5e5e" stroke-width="0.6"/><path d="M9 155.7H12" stroke="#5e5e5e" stroke-width="0.6"/><path d="M9 158.0H12" stroke="#5e5e5e" stroke-width="0.6"/><path d="M9 160.4H12" stroke="#5e5e5e" stroke-width="0.6"/><text x="2" y="147.6" fill="#bcbcbc" font-size="6.5" font-family="Liberation Sans">4</text><text x="2" y="152.9" fill="#bcbcbc" font-size="6.5" font-family="Liberation Sans">0</text><text x="2" y="158.2" fill="#bcbcbc" font-size="6.5" font-family="Liberation Sans">0</text><path d="M0 162.8H12" stroke="#6e6e6e" stroke-width="1"/><path d="M9 165.1H12" stroke="#5e5e5e" stroke-width="0.6"/><path d="M9 167.5H12" stroke="#5e5e5e" stroke-width="0.6"/><path d="M9 169.9H12" stroke="#5e5e5e" stroke-width="0.6"/><path d="M9 172.2H12" stroke="#5e5e5e" stroke-width="0.6"/><path d="M7 174.6H12" stroke="#5e5e5e" stroke-width="0.6"/><path d="M9 177.0H12" stroke="#5e5e5e" stroke-width="0.6"/><path d="M9 179.3H12" stroke="#5e5e5e" stroke-width="0.6"/><path d="M9 181.7H12" stroke="#5e5e5e" stroke-width="0.6"/><path d="M9 184.1H12" stroke="#5e5e5e" stroke-width="0.6"/><text x="2" y="171.3" fill="#bcbcbc" font-size="6.5" font-family="Liberation Sans">4</text><text x="2" y="176.6" fill="#bcbcbc" font-size="6.5" font-family="Liberation Sans">5</text><text x="2" y="181.9" fill="#bcbcbc" font-size="6.5" font-family="Liberation Sans">0</text><path d="M0 186.4H12" stroke="#6e6e6e" stroke-width="1"/><path d="M9 188.8H12" stroke="#5e5e5e" stroke-width="0.6"/><path d="M9 191.2H12" stroke="#5e5e5e" stroke-width="0.6"/><path d="M9 193.5H12" stroke="#5e5e5e" stroke-width="0.6"/><path d="M9 195.9H12" stroke="#5e5e5e" stroke-width="0.6"/><path d="M7 198.3H12" stroke="#5e5e5e" stroke-width="0.6"/><path d="M9 200.6H12" stroke="#5e5e5e" stroke-width="0.6"/><path d="M9 203.0H12" stroke="#5e5e5e" stroke-width="0.6"/><path d="M9 205.4H12" stroke="#5e5e5e" stroke-width="0.6"/><path d="M9 207.8H12" stroke="#5e5e5e" stroke-width="0.6"/><text x="2" y="194.9" fill="#bcbcbc" font-size="6.5" font-family="Liberation Sans">5</text><text x="2" y="200.2" fill="#bcbcbc" font-size="6.5" font-family="Liberation Sans">0</text><text x="2" y="205.5" fill="#bcbcbc" font-size="6.5" font-family="Liberation Sans">0</text><path d="M0 210.1H12" stroke="#6e6e6e" stroke-width="1"/><path d="M9 212.5H12" stroke="#5e5e5e" stroke-width="0.6"/><path d="M9 214.9H12" stroke="#5e5e5e" stroke-width="0.6"/><path d="M9 217.2H12" stroke="#5e5e5e" stroke-width="0.6"/><path d="M9 219.6H12" stroke="#5e5e5e" stroke-width="0.6"/><path d="M7 222.0H12" stroke="#5e5e5e" stroke-width="0.6"/><path d="M9 224.3H12" stroke="#5e5e5e" stroke-width="0.6"/><path d="M9 226.7H12" stroke="#5e5e5e" stroke-width="0.6"/><path d="M9 229.1H12" stroke="#5e5e5e" stroke-width="0.6"/><path d="M9 231.4H12" stroke="#5e5e5e" stroke-width="0.6"/><text x="2" y="218.6" fill="#bcbcbc" font-size="6.5" font-family="Liberation Sans">5</text><text x="2" y="223.9" fill="#bcbcbc" font-size="6.5" font-family="Liberation Sans">5</text><text x="2" y="229.2" fill="#bcbcbc" font-size="6.5" font-family="Liberation Sans">0</text><path d="M0 233.8H12" stroke="#6e6e6e" stroke-width="1"/><path d="M9 236.2H12" stroke="#5e5e5e" stroke-width="0.6"/><path d="M9 238.5H12" stroke="#5e5e5e" stroke-width="0.6"/><path d="M9 240.9H12" stroke="#5e5e5e" stroke-width="0.6"/><path d="M9 243.3H12" stroke="#5e5e5e" stroke-width="0.6"/><path d="M7 245.6H12" stroke="#5e5e5e" stroke-width="0.6"/><path d="M9 248.0H12" stroke="#5e5e5e" stroke-width="0.6"/><path d="M9 250.4H12" stroke="#5e5e5e" stroke-width="0.6"/><path d="M9 252.7H12" stroke="#5e5e5e" stroke-width="0.6"/><path d="M9 255.1H12" stroke="#5e5e5e" stroke-width="0.6"/><text x="2" y="242.3" fill="#bcbcbc" font-size="6.5" font-family="Liberation Sans">6</text><text x="2" y="247.6" fill="#bcbcbc" font-size="6.5" font-family="Liberation Sans">0</text><text x="2" y="252.9" fill="#bcbcbc" font-size="6.5" font-family="Liberation Sans">0</text><path d="M0 257.5H12" stroke="#6e6e6e" stroke-width="1"/><path d="M9 259.8H12" stroke="#5e5e5e" stroke-width="0.6"/><path d="M9 262.2H12" stroke="#5e5e5e" stroke-width="0.6"/><path d="M9 264.6H12" stroke="#5e5e5e" stroke-width="0.6"/><path d="M9 267.0H12" stroke="#5e5e5e" stroke-width="0.6"/><path d="M7 269.3H12" stroke="#5e5e5e" stroke-width="0.6"/><path d="M9 271.7H12" stroke="#5e5e5e" stroke-width="0.6"/><path d="M9 274.1H12" stroke="#5e5e5e" stroke-width="0.6"/><path d="M9 276.4H12" stroke="#5e5e5e" stroke-width="0.6"/><path d="M9 278.8H12" stroke="#5e5e5e" stroke-width="0.6"/><text x="2" y="266.0" fill="#bcbcbc" font-size="6.5" font-family="Liberation Sans">6</text><text x="2" y="271.3" fill="#bcbcbc" font-size="6.5" font-family="Liberation Sans">5</text><text x="2" y="276.6" fill="#bcbcbc" font-size="6.5" font-family="Liberation Sans">0</text><path d="M0 281.2H12" stroke="#6e6e6e" stroke-width="1"/><path d="M9 283.5H12" stroke="#5e5e5e" stroke-width="0.6"/><path d="M9 285.9H12" stroke="#5e5e5e" stroke-width="0.6"/><path d="M9 288.3H12" stroke="#5e5e5e" stroke-width="0.6"/><path d="M9 290.6H12" stroke="#5e5e5e" stroke-width="0.6"/><path d="M7 293.0H12" stroke="#5e5e5e" stroke-width="0.6"/><path d="M9 295.4H12" stroke="#5e5e5e" stroke-width="0.6"/><path d="M9 297.7H12" stroke="#5e5e5e" stroke-width="0.6"/><path d="M9 300.1H12" stroke="#5e5e5e" stroke-width="0.6"/><path d="M9 302.5H12" stroke="#5e5e5e" stroke-width="0.6"/><text x="2" y="289.7" fill="#bcbcbc" font-size="6.5" font-family="Liberation Sans">7</text><text x="2" y="295.0" fill="#bcbcbc" font-size="6.5" font-family="Liberation Sans">0</text><text x="2" y="300.3" fill="#bcbcbc" font-size="6.5" font-family="Liberation Sans">0</text><path d="M0 304.8H12" stroke="#6e6e6e" stroke-width="1"/><path d="M9 307.2H12" stroke="#5e5e5e" stroke-width="0.6"/><path d="M9 309.6H12" stroke="#5e5e5e" stroke-width="0.6"/><path d="M9 311.9H12" stroke="#5e5e5e" stroke-width="0.6"/><path d="M9 314.3H12" stroke="#5e5e5e" stroke-width="0.6"/><path d="M7 316.7H12" stroke="#5e5e5e" stroke-width="0.6"/><path d="M9 319.0H12" stroke="#5e5e5e" stroke-width="0.6"/><path d="M9 321.4H12" stroke="#5e5e5e" stroke-width="0.6"/><path d="M9 323.8H12" stroke="#5e5e5e" stroke-width="0.6"/><path d="M9 326.2H12" stroke="#5e5e5e" stroke-width="0.6"/><text x="2" y="313.3" fill="#bcbcbc" font-size="6.5" font-family="Liberation Sans">7</text><text x="2" y="318.6" fill="#bcbcbc" font-size="6.5" font-family="Liberation Sans">5</text><text x="2" y="323.9" fill="#bcbcbc" font-size="6.5" font-family="Liberation Sans">0</text><path d="M0 328.5H12" stroke="#6e6e6e" stroke-width="1"/><path d="M9 330.9H12" stroke="#5e5e5e" stroke-width="0.6"/><path d="M9 333.3H12" stroke="#5e5e5e" stroke-width="0.6"/><path d="M9 335.6H12" stroke="#5e5e5e" stroke-width="0.6"/><path d="M9 338.0H12" stroke="#5e5e5e" stroke-width="0.6"/><path d="M7 340.4H12" stroke="#5e5e5e" stroke-width="0.6"/><path d="M9 342.7H12" stroke="#5e5e5e" stroke-width="0.6"/><path d="M9 345.1H12" stroke="#5e5e5e" stroke-width="0.6"/><path d="M9 347.5H12" stroke="#5e5e5e" stroke-width="0.6"/><path d="M9 349.8H12" stroke="#5e5e5e" stroke-width="0.6"/><text x="2" y="337.0" fill="#bcbcbc" font-size="6.5" font-family="Liberation Sans">8</text><text x="2" y="342.3" fill="#bcbcbc" font-size="6.5" font-family="Liberation Sans">0</text><text x="2" y="347.6" fill="#bcbcbc" font-size="6.5" font-family="Liberation Sans">0</text><path d="M0 352.2H12" stroke="#6e6e6e" stroke-width="1"/><path d="M9 354.6H12" stroke="#5e5e5e" stroke-width="0.6"/><path d="M9 356.9H12" stroke="#5e5e5e" stroke-width="0.6"/><path d="M9 359.3H12" stroke="#5e5e5e" stroke-width="0.6"/><path d="M9 361.7H12" stroke="#5e5e5e" stroke-width="0.6"/><path d="M7 364.0H12" stroke="#5e5e5e" stroke-width="0.6"/><path d="M9 366.4H12" stroke="#5e5e5e" stroke-width="0.6"/><path d="M9 368.8H12" stroke="#5e5e5e" stroke-width="0.6"/><path d="M9 371.1H12" stroke="#5e5e5e" stroke-width="0.6"/><path d="M9 373.5H12" stroke="#5e5e5e" stroke-width="0.6"/><text x="2" y="360.7" fill="#bcbcbc" font-size="6.5" font-family="Liberation Sans">8</text><text x="2" y="366.0" fill="#bcbcbc" font-size="6.5" font-family="Liberation Sans">5</text><text x="2" y="371.3" fill="#bcbcbc" font-size="6.5" font-family="Liberation Sans">0</text><path d="M0 375.9H12" stroke="#6e6e6e" stroke-width="1"/><path d="M9 378.2H12" stroke="#5e5e5e" stroke-width="0.6"/><path d="M9 380.6H12" stroke="#5e5e5e" stroke-width="0.6"/><path d="M9 383.0H12" stroke="#5e5e5e" stroke-width="0.6"/><path d="M9 385.4H12" stroke="#5e5e5e" stroke-width="0.6"/><path d="M7 387.7H12" stroke="#5e5e5e" stroke-width="0.6"/><path d="M9 390.1H12" stroke="#5e5e5e" stroke-width="0.6"/><path d="M9 392.5H12" stroke="#5e5e5e" stroke-width="0.6"/><path d="M9 394.8H12" stroke="#5e5e5e" stroke-width="0.6"/><path d="M9 397.2H12" stroke="#5e5e5e" stroke-width="0.6"/><text x="2" y="384.4" fill="#bcbcbc" font-size="6.5" font-family="Liberation Sans">9</text><text x="2" y="389.7" fill="#bcbcbc" font-size="6.5" font-family="Liberation Sans">0</text><text x="2" y="395.0" fill="#bcbcbc" font-size="6.5" font-family="Liberation Sans">0</text><path d="M0 399.6H12" stroke="#6e6e6e" stroke-width="1"/><path d="M9 401.9H12" stroke="#5e5e5e" stroke-width="0.6"/><path d="M9 404.3H12" stroke="#5e5e5e" stroke-width="0.6"/><path d="M9 406.7H12" stroke="#5e5e5e" stroke-width="0.6"/><path d="M9 409.0H12" stroke="#5e5e5e" stroke-width="0.6"/><path d="M7 411.4H12" stroke="#5e5e5e" stroke-width="0.6"/><path d="M9 413.8H12" stroke="#5e5e5e" stroke-width="0.6"/><path d="M9 416.1H12" stroke="#5e5e5e" stroke-width="0.6"/><path d="M9 418.5H12" stroke="#5e5e5e" stroke-width="0.6"/><path d="M9 420.9H12" stroke="#5e5e5e" stroke-width="0.6"/><text x="2" y="408.1" fill="#bcbcbc" font-size="6.5" font-family="Liberation Sans">9</text><text x="2" y="413.4" fill="#bcbcbc" font-size="6.5" font-family="Liberation Sans">5</text><text x="2" y="418.7" fill="#bcbcbc" font-size="6.5" font-family="Liberation Sans">0</text><path d="M0 423.2H12" stroke="#6e6e6e" stroke-width="1"/><path d="M9 425.6H12" stroke="#5e5e5e" stroke-width="0.6"/><path d="M9 428.0H12" stroke="#5e5e5e" stroke-width="0.6"/><path d="M9 430.3H12" stroke="#5e5e5e" stroke-width="0.6"/><path d="M9 432.7H12" stroke="#5e5e5e" stroke-width="0.6"/><path d="M7 435.1H12" stroke="#5e5e5e" stroke-width="0.6"/><path d="M9 437.4H12" stroke="#5e5e5e" stroke-width="0.6"/><path d="M9 439.8H12" stroke="#5e5e5e" stroke-width="0.6"/><path d="M9 442.2H12" stroke="#5e5e5e" stroke-width="0.6"/><path d="M9 444.6H12" stroke="#5e5e5e" stroke-width="0.6"/><text x="2" y="431.7" fill="#bcbcbc" font-size="6.5" font-family="Liberation Sans">1</text><text x="2" y="437.0" fill="#bcbcbc" font-size="6.5" font-family="Liberation Sans">0</text><text x="2" y="442.3" fill="#bcbcbc" font-size="6.5" font-family="Liberation Sans">0</text><text x="2" y="447.6" fill="#bcbcbc" font-size="6.5" font-family="Liberation Sans">0</text></svg>
<div class="a" style="left:777px;top:79px;width:12px;height:446px;background:#484848;"></div>
<div class="a" style="left:777px;top:46px;width:12px;height:20px;background:#3c3c3c;"></div>
<div class="a" style="left:777px;top:66px;width:12px;height:13px;background:#474747;"></div>
<svg class="a" style="left:780px;top:72px" width="7" height="5"><path d="M1 4L3.5 1.5L6 4" fill="none" stroke="#999"/></svg>
<div class="a" style="left:52px;top:521px;width:725px;height:4px;background:#474747;"></div>
<div class="a" style="left:634px;top:48px;width:29px;height:40px;background:#535353;border:1px solid #3a3a3a"></div>
<div class="a" style="left:634px;top:48px;width:29px;height:9px;background:#3f3f3f;"></div>
<svg class="a" style="left:640px;top:50px" width="18" height="6"><path d="M1 0.5L3.5 2.5L1 4.5M4 0.5L6.5 2.5L4 4.5" fill="none" stroke="#ccc"/><path d="M12 0.5L16 4.5M16 0.5L12 4.5" stroke="#ccc" stroke-width="1.2"/></svg>
<svg class="a" style="left:644px;top:66px" width="14" height="14"><rect x="1" y="1" width="3" height="3" fill="none" stroke="#ddd" stroke-width="0.8"/><rect x="1" y="5" width="3" height="3" fill="none" stroke="#ddd" stroke-width="0.8"/><rect x="1" y="9" width="3" height="3" fill="#ddd"/><path d="M7 3C11 3 12 7 10 10L8 12M9 1L7 3L9 5" fill="none" stroke="#e6e6e6" stroke-width="1.3"/></svg>
<svg class="a" style="left:243px;top:79px" width="356" height="442">
<defs><linearGradient id="rg" gradientUnits="userSpaceOnUse" x1="76" y1="0" x2="280" y2="0"><stop offset="0" stop-color="#f8dc58"/><stop offset="0.5" stop-color="#ace38a"/><stop offset="1" stop-color="#60f0c6"/></linearGradient></defs>
<path d="M177.6,121.8 A93.7,93.7 0 0 1 271.3,215.5" fill="none" stroke="#f9d95c" stroke-width="4.8"/>
<path d="M273.6,215.5 A96,96 0 1 1 177.6,119.5" fill="none" stroke="url(#rg)" stroke-width="12" stroke-linecap="round"/>
</svg>
<div class="a" style="left:789px;top:46px;width:211px;height:9px;background:#3d3d3d;"></div>
<svg class="a" style="left:808px;top:48px" width="8" height="5"><path d="M3.5 0.5L1 2.5L3.5 4.5M7 0.5L4.5 2.5L7 4.5" fill="none" stroke="#bdbdbd"/></svg>
<svg class="a" style="left:989px;top:48px" width="8" height="5"><path d="M1 0.5L3.5 2.5L1 4.5M4.5 0.5L7 2.5L4.5 4.5" fill="none" stroke="#bdbdbd"/></svg>
<div class="a" style="left:789px;top:55px;width:2px;height:470px;background:#3a3a3a;"></div>
<div class="a" style="left:791px;top:55px;width:27px;height:470px;background:#454545;"></div>
<div class="a" style="left:792px;top:56px;width:26px;height:28px;background:#4f4f4f;"></div>
<div class="a" style="left:792px;top:85px;width:26px;height:40px;background:#4f4f4f;"></div>
<svg class="a" style="left:798px;top:63px" width="16" height="14"><circle cx="5" cy="5" r="4" fill="none" stroke="#ddd" stroke-width="1.2"/><path d="M3 5H7M5 3V7" stroke="#ddd"/><rect x="11" y="1" width="3" height="3" fill="#ddd"/><rect x="11" y="6" width="3" height="3" fill="#ddd"/><rect x="1" y="11" width="13" height="2" fill="#ddd"/></svg>
<div class="t" style="left:800px;top:93px;font-size:14px;line-height:14px;color:#d8d8d8">A</div>
<div class="a" style="left:811px;top:94px;width:1px;height:12px;background:#d8d8d8;"></div>
<div class="a" style="left:818px;top:55px;width:2px;height:470px;background:#3a3a3a;"></div>
<div class="a" style="left:820px;top:55px;width:180px;height:470px;background:#535353;"></div>
<div class="a" style="left:820px;top:55px;width:180px;height:20px;background:#424242;"></div>
<div class="a" style="left:820px;top:55px;width:29px;height:20px;background:#535353;"></div>
<div class="a" style="left:849px;top:55px;width:30px;height:20px;background:#474747;"></div>
<div class="t" style="left:827px;top:60px;color:#e8e8e8">颜色</div>
<div class="t" style="left:856px;top:60px;color:#bdbdbd">色板</div>
<svg class="a" style="left:986px;top:60px" width="10" height="9"><path d="M1 1.5H9M1 4.5H9M1 7.5H9" stroke="#aaa" stroke-width="1.3"/></svg>
<div class="a" style="left:835px;top:91px;width:13px;height:13px;background:#ffffff;"></div>
<div class="a" style="left:827px;top:83px;width:15px;height:15px;background:#000000;border:1px solid #8a8a8a"></div>
<div class="a" style="left:853px;top:80px;width:108px;height:128px;background:linear-gradient(180deg,rgba(0,0,0,0),#000),linear-gradient(90deg,#fff,#f00)"></div>
<div class="a" style="left:973px;top:80px;width:15px;height:64px;background:linear-gradient(180deg,#ff0030,#f0f 25%,#6000ff 50%,#00f 60%,#0ff)"></div>
<div class="a" style="left:552px;top:112px;width:460px;height:387px;background:linear-gradient(180deg,#b9cde4,#a8c2de 22px,#a3c4e3 60px,#aed4ec);border-radius:5px 5px 0 0;border:1px solid #6b7785;border-bottom:2px solid #1e2a30"></div>
<div class="t" style="left:562px;top:120px;color:#15202c;font-size:9px;text-shadow:0 0 0.3px #15202c">图层样式</div>
<div class="a" style="left:558px;top:134px;width:450px;height:358px;background:#535353;"></div>
<div class="a" style="left:558px;top:134px;width:450px;height:12px;background:linear-gradient(180deg,#4f4f4f,#514f4f);border-top:1px solid #3c3c3c"></div>
<div class="a" style="left:566px;top:143px;width:156px;height:321px;background:#4f4f4f;border:1px solid #444"></div>
<div class="a" style="left:567px;top:163px;width:154px;height:1px;background:#404040;"></div>
<div class="t" style="left:572px;top:150px;">样式</div>
<div class="a" style="left:567px;top:182px;width:154px;height:1px;background:#404040;"></div>
<div class="t" style="left:572px;top:169px;">混合选项</div>
<div class="a" style="left:567px;top:201px;width:154px;height:1px;background:#404040;"></div>
<div class="cb" style="left:571px;top:187px"></div>
<div class="t" style="left:585px;top:188px;">斜面和浮雕</div>
<div class="a" style="left:567px;top:220px;width:154px;height:1px;background:#404040;"></div>
<div class="cb" style="left:578px;top:206px"></div>
<div class="t" style="left:592px;top:207px;">等高线</div>
<div class="a" style="left:567px;top:239px;width:154px;height:1px;background:#404040;"></div>
<div class="cb" style="left:578px;top:225px"></div>
<div class="t" style="left:592px;top:226px;">纹理</div>
<div class="a" style="left:567px;top:240px;width:154px;height:18px;background:#676767;"></div>
<div class="a" style="left:567px;top:258px;width:154px;height:1px;background:#404040;"></div>
<div class="cbk" style="left:571px;top:244px"></div>
<svg class="a" style="left:571px;top:244px" width="10" height="10"><path d="M2 5L4.3 7.5L8.5 2.5" fill="none" stroke="#3a3a3a" stroke-width="1.8"/></svg>
<div class="t" style="left:585px;top:245px;">描边</div>
<div class="pl" style="left:707px;top:244px"></div>
<div class="a" style="left:567px;top:277px;width:154px;height:1px;background:#404040;"></div>
<div class="cb" style="left:571px;top:263px"></div>
<div class="t" style="left:585px;top:264px;">内阴影</div>
<div class="pl" style="left:707px;top:263px"></div>
<div class="a" style="left:567px;top:296px;width:154px;height:1px;background:#404040;"></div>
<div class="cb" style="left:571px;top:282px"></div>
<div class="t" style="left:585px;top:283px;">内发光</div>
<div class="a" style="left:567px;top:315px;width:154px;height:1px;background:#404040;"></div>
<div class="cb" style="left:571px;top:301px"></div>
<div class="t" style="left:585px;top:302px;">光泽</div>
<div class="a" style="left:567px;top:334px;width:154px;height:1px;background:#404040;"></div>
<div class="cb" style="left:571px;top:320px"></div>
<div class="t" style="left:585px;top:321px;">颜色叠加</div>
<div class="pl" style="left:707px;top:320px"></div>
<div class="a" style="left:567px;top:353px;width:154px;height:1px;background:#404040;"></div>
<div class="cb" style="left:571px;top:339px"></div>
<div class="t" style="left:585px;top:340px;">渐变叠加</div>
<div class="pl" style="left:707px;top:339px"></div>
<div class="a" style="left:567px;top:372px;width:154px;height:1px;background:#404040;"></div>
<div class="cb" style="left:571px;top:358px"></div>
<div class="t" style="left:585px;top:359px;">图案叠加</div>
<div class="a" style="left:567px;top:391px;width:154px;height:1px;background:#404040;"></div>
<div class="cb" style="left:571px;top:377px"></div>
<div class="t" style="left:585px;top:378px;">外发光</div>
<div class="a" style="left:567px;top:410px;width:154px;height:1px;background:#404040;"></div>
<div class="cb" style="left:571px;top:396px"></div>
<div class="t" style="left:585px;top:397px;">投影</div>
<div class="pl" style="left:707px;top:396px"></div>
<div class="t" style="left:572px;top:468px;font-style:italic;font-size:11px;color:#e0e0e0;font-family:Liberation Serif,serif">fx</div>
<div class="a" style="left:583px;top:480px;width:2px;height:2px;background:#ddd;"></div>
<svg class="a" style="left:592px;top:470px" width="10" height="10"><path d="M5 1L9 5H6.5V9H3.5V5H1Z" fill="#7a7a7a"/></svg>
<svg class="a" style="left:611px;top:470px" width="10" height="10"><path d="M5 9L9 5H6.5V1H3.5V5H1Z" fill="#7a7a7a"/></svg>
<svg class="a" style="left:716px;top:470px" width="9" height="11"><path d="M1 2.5H8M3 2.5V1H6V2.5M1.5 3.5H7.5V10H1.5Z" fill="none" stroke="#9a9a9a"/><path d="M3.5 5V8.5M5.5 5V8.5" stroke="#9a9a9a" stroke-width="0.8"/></svg>
<div class="a" style="left:722px;top:143px;width:12px;height:321px;background:#4a4a4a;border:1px solid #474747"></div>
<div class="a" style="left:746px;top:146px;width:270px;height:336px;border:1px solid #474747;box-shadow:inset 1px 1px 0 #5c5c5c"></div>
<div class="a" style="left:758px;top:140px;width:30px;height:12px;background:#535353;"></div>
<div class="t" style="left:761px;top:141px;">描边</div>
<div class="a" style="left:753px;top:160px;width:260px;height:98px;border:1px solid #474747;box-shadow:inset 1px 1px 0 #5c5c5c"></div>
<div class="a" style="left:766px;top:154px;width:30px;height:12px;background:#535353;"></div>
<div class="t" style="left:769px;top:155px;">结构</div>
<div class="t" style="left:619px;width:200px;text-align:right;top:175px;">大小<span class="n">(S):</span></div>
<div class="a" style="left:826px;top:175px;width:71px;height:2px;background:#7d7d7d;border-bottom:1px solid #5f5f5f"></div>
<svg class="a" style="left:833px;top:176px" width="10" height="8"><path d="M1 7.5V5L5 1L9 5V7.5Z" fill="#f2f2f2"/></svg>
<div class="inp" style="left:903px;top:172px;width:32px;height:15px;border-color:#3c5a82;background:#3f3f3f"></div>
<div class="a" style="left:905px;top:174px;width:11px;height:10px;background:#3c7ee0;"></div>
<div class="t" style="left:905px;top:174px;color:#fff;letter-spacing:-0.5px">26</div>
<div class="t" style="left:937px;top:175px;">像素</div>
<div class="t" style="left:619px;width:200px;text-align:right;top:192px;">位置:</div>
<div class="dd" style="left:824px;top:190px;width:40px;height:14px"></div>
<div class="t" style="left:830px;top:192px;">居中</div>
<svg class="a" style="left:856px;top:196px" width="7" height="5"><path d="M1 1L3.5 3.5L6 1" fill="none" stroke="#bdbdbd" stroke-width="1.2"/></svg>
<div class="t" style="left:619px;width:200px;text-align:right;top:211px;">混合模式:</div>
<div class="dd" style="left:824px;top:208px;width:95px;height:14px"></div>
<div class="t" style="left:831px;top:210px;">正常</div>
<svg class="a" style="left:911px;top:214px" width="7" height="5"><path d="M1 1L3.5 3.5L6 1" fill="none" stroke="#bdbdbd" stroke-width="1.2"/></svg>
<div class="t" style="left:619px;width:200px;text-align:right;top:227px;">不透明度<span class="n">(O):</span></div>
<div class="a" style="left:826px;top:229px;width:71px;height:2px;background:#7d7d7d;border-bottom:1px solid #5f5f5f"></div>
<svg class="a" style="left:891px;top:230px" width="10" height="8"><path d="M1 7.5V5L5 1L9 5V7.5Z" fill="#f2f2f2"/></svg>
<div class="inp" style="left:904px;top:226px;width:31px;height:13px"></div>
<div class="t" style="left:906px;top:228px;letter-spacing:-0.5px">100</div>
<div class="t" style="left:938px;top:228px;">%</div>
<div class="cb" style="left:825px;top:243px;width:10px;height:10px"></div>
<div class="t" style="left:840px;top:243px;">叠印</div>
<div class="a" style="left:753px;top:261px;width:260px;height:111px;border:1px solid #474747;box-shadow:inset 1px 1px 0 #5c5c5c"></div>
<div class="t" style="left:627px;width:200px;text-align:right;top:268px;">填充类型:</div>
<div class="dd" style="left:831px;top:265px;width:41px;height:14px"></div>
<div class="t" style="left:836px;top:268px;">渐变</div>
<svg class="a" style="left:863px;top:271px" width="7" height="5"><path d="M1 1L3.5 3.5L6 1" fill="none" stroke="#bdbdbd" stroke-width="1.2"/></svg>
<div class="t" style="left:600px;width:200px;text-align:right;top:292px;">渐变:</div>
<div class="a" style="left:804px;top:287px;width:80px;height:19px;background:linear-gradient(90deg,#fbdd5c,#ace58a 50%,#5ff0c6)"></div>
<div class="a" style="left:884px;top:287px;width:9px;height:19px;background:#404040;"></div>
<svg class="a" style="left:885px;top:296px" width="7" height="5"><path d="M1 1L3.5 3.5L6 1" fill="none" stroke="#bdbdbd" stroke-width="1.2"/></svg>
<div class="cb" style="left:900px;top:292px;width:10px;height:10px"></div>
<div class="t" style="left:915px;top:292px;">反向<span class="n">(R)</span></div>
<div class="t" style="left:600px;width:200px;text-align:right;top:311px;">样式:</div>
<div class="dd" style="left:804px;top:310px;width:89px;height:13px"></div>
<div class="t" style="left:811px;top:311px;">线性</div>
<svg class="a" style="left:885px;top:315px" width="7" height="5"><path d="M1 1L3.5 3.5L6 1" fill="none" stroke="#bdbdbd" stroke-width="1.2"/></svg>
<div class="cbk" style="left:900px;top:311px"></div>
<svg class="a" style="left:900px;top:311px" width="10" height="10"><path d="M2 5L4.3 7.5L8.5 2.5" fill="none" stroke="#3a3a3a" stroke-width="1.8"/></svg>
<div class="t" style="left:915px;top:311px;">与图层对齐<span class="n">(G)</span></div>
<div class="t" style="left:600px;width:200px;text-align:right;top:334px;">角度<span class="n">(A):</span></div>
<svg class="a" style="left:802px;top:324px" width="28" height="28"><circle cx="14" cy="14" r="12.5" fill="none" stroke="#9a9a9a" stroke-width="1"/><path d="M14 14H24" stroke="#cfcfcf" stroke-width="1"/><circle cx="14.5" cy="14" r="1.2" fill="#ddd"/></svg>
<div class="inp" style="left:832px;top:331px;width:31px;height:14px"></div>
<div class="t" style="left:834px;top:334px;">0</div>
<div class="t" style="left:866px;top:334px;">度</div>
<div class="a" style="left:893px;top:332px;width:54px;height:13px;background:#464646;border:1px solid #434343"></div>
<div class="t" style="left:902px;top:334px;">重置对齐</div>
<div class="cbk" style="left:966px;top:332px"></div>
<svg class="a" style="left:966px;top:332px" width="10" height="10"><path d="M2 5L4.3 7.5L8.5 2.5" fill="none" stroke="#3a3a3a" stroke-width="1.8"/></svg>
<div class="t" style="left:981px;top:334px;">仿色</div>
<div class="t" style="left:600px;width:200px;text-align:right;top:355px;">缩放<span class="n">(C):</span></div>
<div class="a" style="left:808px;top:356px;width:79px;height:2px;background:#7d7d7d;border-bottom:1px solid #5f5f5f"></div>
<svg class="a" style="left:850px;top:357px" width="10" height="8"><path d="M1 7.5V5L5 1L9 5V7.5Z" fill="#f2f2f2"/></svg>
<div class="inp" style="left:899px;top:353px;width:30px;height:13px"></div>
<div class="t" style="left:901px;top:355px;letter-spacing:-0.5px">100</div>
<div class="t" style="left:933px;top:355px;">%</div>
<div class="a" style="left:807px;top:380px;width:73px;height:13px;background:#464646;border:1px solid #434343"></div>
<div class="t" style="left:817px;top:382px;">设置为默认值</div>
<div class="a" style="left:887px;top:380px;width:73px;height:13px;background:#464646;border:1px solid #434343"></div>
<div class="t" style="left:897px;top:382px;">复位为默认值</div>
<svg class="a" style="left:0;top:0" width="1000" height="525">
<path d="M744.5,173 L788,184.5 L791.5,183.5 L800,193.5 L786,196.5 L786.5,192 L745,175.5Z" fill="#fe2b2b"/>
<path d="M814.5,127.5 L886,153 L889.5,151.5 L897,161 L884,163 L884.5,158 L815,129.8Z" fill="#fe2b2b"/>
<path d="M928,261.5 L928.5,263.5 L885,273.5 L885.5,279 L872,275.5 L881.5,266.5 L884,268.5Z" fill="#fe2b2b"/>
</svg>
<div class="a" style="left:560px;top:481px;width:175px;height:1px;background:#474747;"></div>
<div class="a" style="left:560px;top:482px;width:175px;height:10px;background:#4f4f4f;"></div>
<div class="a" style="left:553px;top:492px;width:219px;height:6px;background:linear-gradient(180deg,#bcd6ec,#98cfe6);"></div>
<div class="a" style="left:772px;top:495px;width:208px;height:3px;background:#9ccfe4;"></div>
<div class="a" style="left:772px;top:492px;width:208px;height:3px;background:#535353;"></div>
<div class="a" style="left:980px;top:492px;width:20px;height:6px;background:linear-gradient(180deg,#bcd6ec,#98cfe6);"></div>
<div class="a" style="left:553px;top:498px;width:447px;height:1px;background:#0e1a20;"></div>
<div class="a" style="left:599px;top:499px;width:178px;height:22px;background:#282828;"></div>
<div class="a" style="left:777px;top:499px;width:12px;height:26px;background:#484848;"></div>
<svg class="a" style="left:780px;top:511px" width="7" height="5"><path d="M1 1L3.5 3.5L6 1" fill="none" stroke="#8a8a8a"/></svg>
<div class="a" style="left:789px;top:499px;width:31px;height:26px;background:#4b4b4b;"></div>
<div class="a" style="left:820px;top:499px;width:180px;height:26px;background:#535353;"></div>
<div class="a" style="left:820px;top:515px;width:180px;height:1px;background:#474747;"></div>
<div class="t" style="left:849px;top:518px;color:#9a9a9a;font-size:10px">∞</div>
<div class="t" style="left:872px;top:517px;color:#9a9a9a;font-size:9px;font-style:italic">fx</div>
<div class="a" style="left:891px;top:518px;width:7px;height:7px;background:#8a8a8a;"></div>
<div class="a" style="left:52px;top:521px;width:725px;height:4px;background:#505050;"></div>
<div class="t" style="left:56px;top:520px;font-size:9px;color:#d0d0d0">64.42%</div>
<div class="t" style="left:115px;top:520px;font-size:9px;color:#d0d0d0">文档:2.36M/2.36M</div>
<div class="t" style="left:765px;top:489px;color:#fff;font-size:11px;font-weight:bold">J</div>
<div class="t" style="left:795px;top:488px;color:#fff;font-size:11px;font-weight:bold">gy</div>
<div class="a" style="left:908px;top:515px;width:70px;height:14px;background:#a6d6ee;border-radius:4px;border:1px solid #7fb6d6"></div>
<div class="t" style="left:912px;top:515px;color:#1d3f66;font-size:10px;letter-spacing:1px">中 ° ↙ ∮</div>
<svg class="a" style="left:955px;top:503px" width="45" height="22"><path d="M8 4L10 9L7 12L10 14L6 19" fill="none" stroke="#f0dc3c" stroke-width="3"/><path d="M9 3C12 1 17 2 20 7" fill="none" stroke="#dfe6c8" stroke-width="3"/><circle cx="33" cy="16" r="13" fill="#8cb6e8" stroke="#b6c8d8" stroke-width="1.5"/><circle cx="26" cy="9" r="2" fill="#ee8a8a"/><circle cx="40" cy="14" r="2" fill="#ee8a8a"/><circle cx="30" cy="19" r="1.5" fill="#ee8a8a"/></svg>
</body></html>
